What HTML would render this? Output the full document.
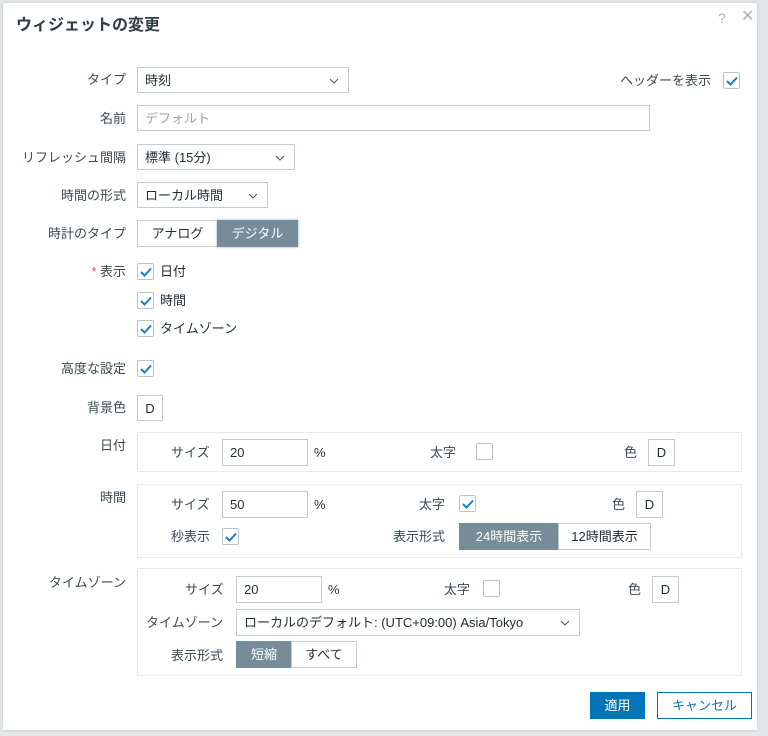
<!DOCTYPE html>
<html><head><meta charset="utf-8"><style>
*{box-sizing:border-box;margin:0;padding:0}
body{width:768px;height:736px;background:#e5e8ea;font-family:"Liberation Sans","Noto Sans CJK JP",sans-serif;font-size:13px;color:#1f2c33;position:relative;overflow:hidden}
#dlg{position:absolute;left:3px;top:3px;width:754px;height:727px;background:#fff;box-shadow:0 0 4px rgba(0,0,0,.15)}
.a{position:absolute;white-space:nowrap;line-height:18px}
.lbl{position:absolute;white-space:nowrap;text-align:right;color:#3b4a53;line-height:18px}
.inp{position:absolute;border:1px solid #c3ccd1;background:#fff;padding-left:7px;line-height:25px;white-space:nowrap}
.cb{position:absolute;width:17px;height:17px;border:1px solid #b9c4ca;border-radius:2px;background:#fff}
.cb svg{position:absolute;left:2px;top:3px}
.sel svg{position:absolute;right:9px;top:10px}
.btn{position:absolute;border:1px solid #c3ccd1;text-align:center;line-height:25px;background:#fff;white-space:nowrap}
.on{background:#768d99;color:#fff;border-color:#768d99}
.grp{position:absolute;border:1px solid #e6eaec}
</style></head><body>
<div id="dlg"></div>
<div class="a" style="left:16px;top:16px;font-size:16px;font-weight:bold;color:#2e3d47;line-height:20px">ウィジェットの変更</div>
<div class="a" style="left:718px;top:9px;font-size:14px;color:#a9b5bc">?</div>
<div class="a" style="left:741px;top:8px;font-size:16px;color:#a9b5bc">✕</div>

<div class="lbl" style="right:642px;top:71px">タイプ</div>
<div class="inp sel" style="left:137px;top:67px;width:212px;height:26px">時刻<svg width="10" height="6"><path d="M1 1l4 4 4-4" stroke="#555" fill="none"/></svg></div>
<div class="a" style="left:620px;top:72px;color:#3b4a53">ヘッダーを表示</div>
<div class="cb" style="left:723px;top:72px"><svg width="12" height="10"><path d="M1 5l3.5 3.5L11 1.5" stroke="#1b7fc4" stroke-width="2" fill="none"/></svg></div>

<div class="lbl" style="right:642px;top:110px">名前</div>
<div class="inp" style="left:137px;top:105px;width:513px;height:26px;color:#9aa6ad">デフォルト</div>

<div class="lbl" style="right:642px;top:149px">リフレッシュ間隔</div>
<div class="inp sel" style="left:137px;top:144px;width:158px;height:26px">標準 (15分)<svg width="10" height="6"><path d="M1 1l4 4 4-4" stroke="#555" fill="none"/></svg></div>

<div class="lbl" style="right:642px;top:187px">時間の形式</div>
<div class="inp sel" style="left:137px;top:182px;width:131px;height:26px">ローカル時間<svg width="10" height="6"><path d="M1 1l4 4 4-4" stroke="#555" fill="none"/></svg></div>

<div class="lbl" style="right:642px;top:225px">時計のタイプ</div>
<div class="btn" style="left:137px;top:220px;width:81px;height:27px">アナログ</div>
<div class="btn on" style="left:217px;top:220px;width:81px;height:27px;box-shadow:0 0 2px #6fa8d6">デジタル</div>

<div class="lbl" style="right:642px;top:263px"><span style="color:#d64e4e">*</span> 表示</div>
<div class="cb" style="left:137px;top:263px"><svg width="12" height="10"><path d="M1 5l3.5 3.5L11 1.5" stroke="#1b7fc4" stroke-width="2" fill="none"/></svg></div><div class="a" style="left:160px;top:263px">日付</div>
<div class="cb" style="left:137px;top:292px"><svg width="12" height="10"><path d="M1 5l3.5 3.5L11 1.5" stroke="#1b7fc4" stroke-width="2" fill="none"/></svg></div><div class="a" style="left:160px;top:292px">時間</div>
<div class="cb" style="left:137px;top:320px"><svg width="12" height="10"><path d="M1 5l3.5 3.5L11 1.5" stroke="#1b7fc4" stroke-width="2" fill="none"/></svg></div><div class="a" style="left:160px;top:320px">タイムゾーン</div>

<div class="lbl" style="right:642px;top:360px">高度な設定</div>
<div class="cb" style="left:137px;top:360px"><svg width="12" height="10"><path d="M1 5l3.5 3.5L11 1.5" stroke="#1b7fc4" stroke-width="2" fill="none"/></svg></div>

<div class="lbl" style="right:642px;top:399px">背景色</div>
<div class="btn" style="left:137px;top:395px;width:26px;height:26px">D</div>

<div class="lbl" style="right:642px;top:437px">日付</div>
<div class="grp" style="left:137px;top:432px;width:605px;height:40px"></div>
<div class="a" style="left:171px;top:444px;color:#3b4a53">サイズ</div>
<div class="inp" style="left:222px;top:439px;width:86px;height:27px">20</div>
<div class="a" style="left:314px;top:444px">%</div>
<div class="a" style="left:430px;top:444px;color:#3b4a53">太字</div>
<div class="cb" style="left:476px;top:443px"></div>
<div class="a" style="left:624px;top:444px;color:#3b4a53">色</div>
<div class="btn" style="left:648px;top:439px;width:27px;height:27px">D</div>

<div class="lbl" style="right:642px;top:489px">時間</div>
<div class="grp" style="left:137px;top:484px;width:605px;height:74px"></div>
<div class="a" style="left:171px;top:496px;color:#3b4a53">サイズ</div>
<div class="inp" style="left:222px;top:491px;width:86px;height:27px">50</div>
<div class="a" style="left:314px;top:496px">%</div>
<div class="a" style="left:419px;top:496px;color:#3b4a53">太字</div>
<div class="cb" style="left:459px;top:495px"><svg width="12" height="10"><path d="M1 5l3.5 3.5L11 1.5" stroke="#1b7fc4" stroke-width="2" fill="none"/></svg></div>
<div class="a" style="left:612px;top:496px;color:#3b4a53">色</div>
<div class="btn" style="left:636px;top:491px;width:27px;height:27px">D</div>
<div class="a" style="left:171px;top:528px;color:#3b4a53">秒表示</div>
<div class="cb" style="left:222px;top:528px"><svg width="12" height="10"><path d="M1 5l3.5 3.5L11 1.5" stroke="#1b7fc4" stroke-width="2" fill="none"/></svg></div>
<div class="a" style="left:393px;top:528px;color:#3b4a53">表示形式</div>
<div class="btn on" style="left:459px;top:523px;width:100px;height:27px">24時間表示</div>
<div class="btn" style="left:558px;top:523px;width:93px;height:27px">12時間表示</div>

<div class="lbl" style="right:642px;top:574px">タイムゾーン</div>
<div class="grp" style="left:137px;top:568px;width:605px;height:108px"></div>
<div class="a" style="left:185px;top:581px;color:#3b4a53">サイズ</div>
<div class="inp" style="left:236px;top:576px;width:86px;height:27px">20</div>
<div class="a" style="left:328px;top:581px">%</div>
<div class="a" style="left:444px;top:581px;color:#3b4a53">太字</div>
<div class="cb" style="left:483px;top:580px"></div>
<div class="a" style="left:628px;top:581px;color:#3b4a53">色</div>
<div class="btn" style="left:652px;top:576px;width:27px;height:27px">D</div>
<div class="a" style="left:146px;top:614px;color:#3b4a53">タイムゾーン</div>
<div class="inp sel" style="left:236px;top:609px;width:344px;height:27px">ローカルのデフォルト: (UTC+09:00) Asia/Tokyo<svg width="10" height="6"><path d="M1 1l4 4 4-4" stroke="#555" fill="none"/></svg></div>
<div class="a" style="left:171px;top:647px;color:#3b4a53">表示形式</div>
<div class="btn on" style="left:236px;top:641px;width:56px;height:27px">短縮</div>
<div class="btn" style="left:291px;top:641px;width:66px;height:27px">すべて</div>

<div class="btn" style="left:590px;top:692px;width:55px;height:27px;background:#0275b8;border-color:#0275b8;color:#fff">適用</div>
<div class="btn" style="left:657px;top:692px;width:95px;height:27px;border-color:#0275b8;color:#0275b8">キャンセル</div>
</body></html>
